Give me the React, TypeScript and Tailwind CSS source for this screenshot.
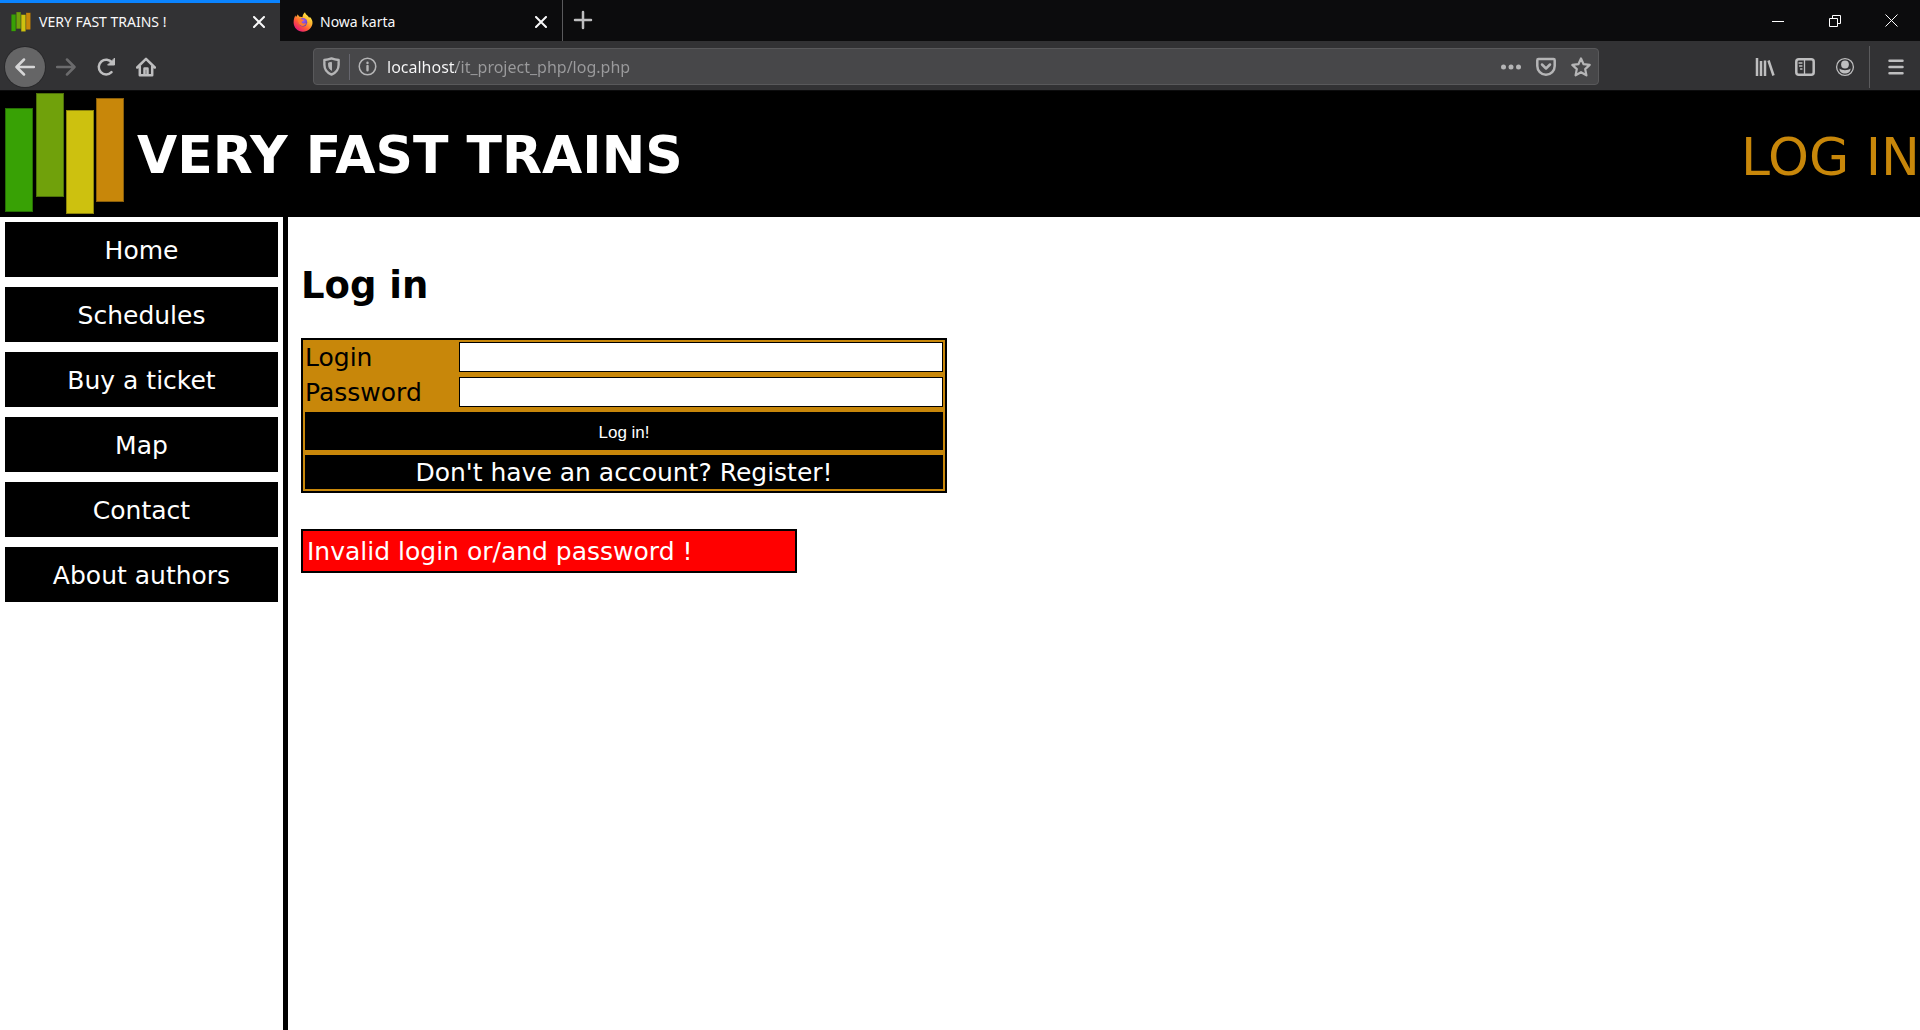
import type { ReactNode } from "react";

const iconBtn = "flex size-10 shrink-0 items-center justify-center text-[#bebebf]";

function TrainLogo({ className }: { className: string }) {
  return (
    <svg viewBox="0 0 120 124" className={className} aria-hidden="true">
      <rect x="0.5" y="15.5" width="27" height="103" fill="#38a105" stroke="#276f05" />
      <rect x="31.5" y="0.5" width="27" height="103" fill="#70a10b" stroke="#4e700a" />
      <rect x="61.5" y="17.5" width="27" height="103" fill="#cdc10f" stroke="#8c840c" />
      <rect x="91.5" y="5.5" width="27" height="103" fill="#c8870a" stroke="#8a5e0a" />
    </svg>
  );
}

function FirefoxLogo() {
  return (
    <svg viewBox="0 0 20 20" className="size-5 shrink-0" aria-hidden="true">
      <defs>
        <linearGradient id="flame" x1="0.85" y1="0.1" x2="0.2" y2="0.95">
          <stop offset="0" stopColor="#fff14a" />
          <stop offset="0.35" stopColor="#ffb02e" />
          <stop offset="0.65" stopColor="#ff5a36" />
          <stop offset="1" stopColor="#e3157b" />
        </linearGradient>
        <radialGradient id="globe" cx="0.5" cy="0.3" r="0.8">
          <stop offset="0" stopColor="#a45cf5" />
          <stop offset="1" stopColor="#4f3bb5" />
        </radialGradient>
      </defs>
      <path
        d="M12 0.3c.3 1.500 1.500 2.400 2.700 3.400C15.600 4.500 16 5.200 16.200 6l.5-1.300C18.800 6.700 19.700 9 19.500 11.200 19 16 15 19.700 10 19.700 4.800 19.700.6 15.600.6 10.500.6 7.500 1.200 5 2.600 3.200c0 .6.100 1.200.4 1.700C3.800 4 4.600 2.900 4.700 2.300c.5.800 1 1.900 2 2.400 1.200-.2 2 .1 2.800.5C9.600 3.300 10.500 1.500 12 .3z"
        fill="url(#flame)"
      />
      <circle cx="10" cy="10.300" r="4.200" fill="url(#globe)" />
      <path
        d="M5 6.800c1.500-.8 3.200-.3 4 .7l1.700.3c.2.900-.9 1.300-1.900 1.800-.5.800.2 1.900 1.700 2 1.200 0 2-.4 2.800-.3-.8 1.700-2.300 2.700-4 2.600C6.800 13.800 4.500 11 5 6.800z"
        fill="#ff7a2f"
      />
    </svg>
  );
}

function CloseIcon() {
  return (
    <svg viewBox="0 0 12 12" className="size-3" fill="none" stroke="#f9f9fa" strokeWidth="2" strokeLinecap="round" aria-hidden="true">
      <path d="M1 1l10 10M11 1L1 11" />
    </svg>
  );
}

function Icon({ children, className = "size-5" }: { children: ReactNode; className?: string }) {
  return (
    <svg
      viewBox="0 0 20 20"
      className={className}
      fill="none"
      stroke="currentColor"
      strokeWidth="2.500"
      strokeLinecap="round"
      strokeLinejoin="round"
      aria-hidden="true"
    >
      {children}
    </svg>
  );
}

function TabStrip() {
  return (
    <div className="flex h-[41px] bg-[#0c0c0d] font-['Noto_Sans',sans-serif] text-[14px] text-[#f9f9fa]">
      <div className="flex w-[280px] items-center border-t-[3px] border-[#0a84ff] bg-[#323234] pr-[15px] pl-[11px]">
        <TrainLogo className="size-5 shrink-0" />
        <span className="ml-2 flex-1 whitespace-nowrap">VERY FAST TRAINS !</span>
        <button aria-label="Close tab VERY FAST TRAINS !">
          <CloseIcon />
        </button>
      </div>
      <div className="flex w-[283px] items-center border-r border-[#5a5a5c] pt-[3px] pr-[15px] pl-[13px]">
        <FirefoxLogo />
        <span className="ml-[7px] flex-1 whitespace-nowrap">Nowa karta</span>
        <button aria-label="Close tab Nowa karta">
          <CloseIcon />
        </button>
      </div>
      <button aria-label="New tab" className={iconBtn}>
        <Icon>
          <path d="M10 2v16M2 10h16" />
        </Icon>
      </button>
      <div className="ml-auto flex text-white">
        <button aria-label="Minimize" className="flex w-14 items-center justify-center">
          <svg viewBox="0 0 12 12" className="size-3" fill="none" stroke="currentColor" aria-hidden="true">
            <path d="M0 6.500h12" />
          </svg>
        </button>
        <button aria-label="Restore" className="flex w-[57px] items-center justify-center">
          <svg viewBox="0 0 12 12" className="size-3" fill="none" stroke="currentColor" aria-hidden="true">
            <path d="M0.500 3.500h8v8h-8zM3.500 3.500v-3h8v8h-3" />
          </svg>
        </button>
        <button aria-label="Close window" className="flex w-[57px] items-center justify-center">
          <svg viewBox="0 0 13 13" className="size-[13px]" fill="none" stroke="currentColor" aria-hidden="true">
            <path d="M0.500 0.500l12 12M12.500 0.500l-12 12" />
          </svg>
        </button>
      </div>
    </div>
  );
}

function Toolbar() {
  return (
    <div className="flex h-[50px] items-center border-b border-[#0c0c0d] bg-[#323234] pt-[2px] pr-[3px] pl-[5px] font-['Noto_Sans',sans-serif]">
      <button aria-label="Back" className="mr-px flex size-10 shrink-0 items-center justify-center rounded-full bg-[#656566] text-[#d6d6d7] ring-1 ring-[#29292b]">
        <Icon>
          <path d="M19 10H2M9 2.500L1.500 10 9 17.500" />
        </Icon>
      </button>
      <button aria-label="Forward" disabled className="flex size-10 shrink-0 items-center justify-center text-[#6b6b6d]">
        <Icon>
          <path d="M1 10h17M11 2.500l7.500 7.500-7.500 7.500" />
        </Icon>
      </button>
      <button aria-label="Reload" className={iconBtn}>
        <Icon>
          <path d="M15.500 15.200A7.400 7.400 0 1 1 16 5.500" />
          <path d="M18.500 1.500v6.500h-6.500z" fill="currentColor" strokeWidth="1" />
        </Icon>
      </button>
      <button aria-label="Home" className={iconBtn}>
        <Icon>
          <path d="M1.200 10.500L10 1.800l8.800 8.700M3.800 9.500v8.700h12.400V9.500" />
          <path d="M8.500 17.500v-6h3v6" />
        </Icon>
      </button>

      <div className="mr-[146px] ml-[147px] flex h-[37px] min-w-0 flex-1 items-center rounded-sm border border-[#59595b] bg-[#474749] text-[#b5b5b6]">
        <button aria-label="Tracking protection" className="flex h-full w-[35px] shrink-0 items-center justify-center">
          <Icon className="size-[19px]">
            <path d="M10 1.500c2.500 1 5 1.500 7.500 1.700v5c0 5-2.500 8.300-7.500 10.300-5-2-7.500-5.300-7.500-10.300v-5C5 3 7.500 2.500 10 1.500z" />
            <path d="M10 6v8c-2-1.200-3-3-3-5.500V6.600z" fill="currentColor" strokeWidth="1" />
          </Icon>
        </button>
        <span className="h-[26px] w-px bg-[#66666e]" />
        <button aria-label="Site information" className="flex h-full w-[35px] shrink-0 items-center justify-center">
          <Icon className="size-[19px]">
            <circle cx="10" cy="10" r="8.700" strokeWidth="1.600" />
            <path d="M10 9.500v4.500M10 6v.2" />
          </Icon>
        </button>
        <input
          aria-label="Address"
          type="text"
          defaultValue="localhost/it_project_php/log.php"
          className="ml-[2px] min-w-0 flex-1 bg-[linear-gradient(90deg,#f9f9fa_69px,#9b9b9d_69px)] bg-clip-text pt-px text-[16px] text-transparent outline-none"
        />
        <button aria-label="Page actions" className="flex h-full w-[35px] items-center justify-center">
          <svg viewBox="0 0 20 20" className="size-5" fill="currentColor" aria-hidden="true">
            <circle cx="2.500" cy="10" r="2.500" />
            <circle cx="10" cy="10" r="2.500" />
            <circle cx="17.500" cy="10" r="2.500" />
          </svg>
        </button>
        <button aria-label="Save to Pocket" className="flex h-full w-[35px] items-center justify-center">
          <Icon>
            <path d="M2.500 2h15c.7 0 1.200.5 1.200 1.200V9c0 4.700-3.700 8.700-8.700 8.700S1.300 13.700 1.300 9V3.200c0-.7.500-1.200 1.200-1.200z" />
            <path d="M6 7.500l4 4 4-4" />
          </Icon>
        </button>
        <button aria-label="Bookmark this page" className="flex h-full w-[35px] items-center justify-center">
          <Icon>
            <path d="M10 1.500l2.600 5.700 6.100.7-4.500 4.200 1.200 6.200-5.400-3.100-5.400 3.100 1.200-6.200L1.300 7.900l6.100-.7z" strokeWidth="2.200" />
          </Icon>
        </button>
      </div>

      <button aria-label="Library" className={iconBtn}>
        <Icon>
          <path d="M2 1v18M6 4v15M10 3.500v15.500M13.500 3.500l5 15" strokeLinecap="butt" />
        </Icon>
      </button>
      <button aria-label="Sidebars" className={iconBtn}>
        <Icon>
          <rect x="1.300" y="2.300" width="17.400" height="15.400" rx="2.500" />
          <path d="M9.500 3v14" strokeWidth="1.300" />
          <path d="M4 6h3M4.500 9h2.500M5.500 12h1.500" strokeWidth="1.300" />
        </Icon>
      </button>
      <button aria-label="Account" className={iconBtn}>
        <Icon>
          <circle cx="10" cy="10" r="8.400" strokeWidth="1.300" />
          <circle cx="10" cy="7.500" r="3.900" fill="currentColor" stroke="none" />
          <path d="M4.500 11.500c2.500 2.200 8.500 2.200 11 0 .3 3-2.300 5-5.500 5s-5.800-2-5.500-5z" fill="currentColor" stroke="none" />
        </Icon>
      </button>
      <span className="mr-[5px] ml-1 h-[42px] w-px shrink-0 bg-[#5b5b5d]" />
      <button aria-label="Open menu" className="flex h-10 w-[42px] shrink-0 items-center justify-center text-[#bebebf]">
        <Icon>
          <path d="M3.500 3.800h13M3.500 10h13M3.500 16.200h13" />
        </Icon>
      </button>
    </div>
  );
}

const links = ["Home", "Schedules", "Buy a ticket", "Map", "Contact", "About authors"];

export default function App() {
  return (
    <div className="flex min-h-screen flex-col bg-white font-['DejaVu_Sans',Verdana,sans-serif] text-[25px] leading-[30px] text-black">
      <TabStrip />
      <Toolbar />
      <header className="flex h-[126px] items-center bg-black pt-[2px] pl-[5px]">
        <TrainLogo className="h-[124px] w-[120px] shrink-0" />
        <span className="ml-3 text-[52px] leading-[60px] font-bold whitespace-nowrap text-white">VERY FAST TRAINS</span>
        <a href="#login" className="mt-1 ml-auto text-[52px] leading-[60px] whitespace-nowrap text-[#c8870a]">
          LOG IN
        </a>
      </header>
      <div className="flex flex-1">
        <nav className="flex w-[15%] shrink-0 flex-col gap-[10px] border-r-[5px] border-black p-[5px]">
          {links.map((label) => (
            <a key={label} href="#" className="flex h-[55px] items-center justify-center bg-black pt-[3px] whitespace-nowrap text-white">
              {label}
            </a>
          ))}
        </nav>
        <main className="min-w-0 flex-1 px-[13px] pt-[45px]">
          <h1 className="text-[37px] leading-[48px] font-bold">Log in</h1>
          <form
            id="login"
            onSubmit={(e) => e.preventDefault()}
            className="mt-7 flex w-[646px] max-w-full flex-col gap-[5px] border-2 border-black bg-[#c8870a] p-[2px]"
          >
            <div className="flex items-center">
              <label htmlFor="user" className="h-[30px] w-[154px] pt-px">Login</label>
              <input id="user" type="text" className="h-[30px] min-w-0 flex-1 border border-black bg-white px-1 text-[16px]" />
            </div>
            <div className="flex items-center">
              <label htmlFor="pass" className="h-[30px] w-[154px] pt-px">Password</label>
              <input id="pass" type="password" className="h-[30px] min-w-0 flex-1 border border-black bg-white px-1 text-[16px]" />
            </div>
            <button type="submit" className="h-[38px] bg-black pt-[3px] font-['Liberation_Sans',Arial,sans-serif] text-[17px] text-white">
              Log in!
            </button>
            <a href="#register" className="h-[34px] bg-black pt-[3px] text-center whitespace-nowrap text-white">
              Don't have an account? Register!
            </a>
          </form>
          <p role="alert" className="mt-9 w-[496px] max-w-full border-2 border-black bg-[#ff0000] px-1 pt-[6px] pb-1 text-white">
            Invalid login or/and password !
          </p>
        </main>
      </div>
    </div>
  );
}
